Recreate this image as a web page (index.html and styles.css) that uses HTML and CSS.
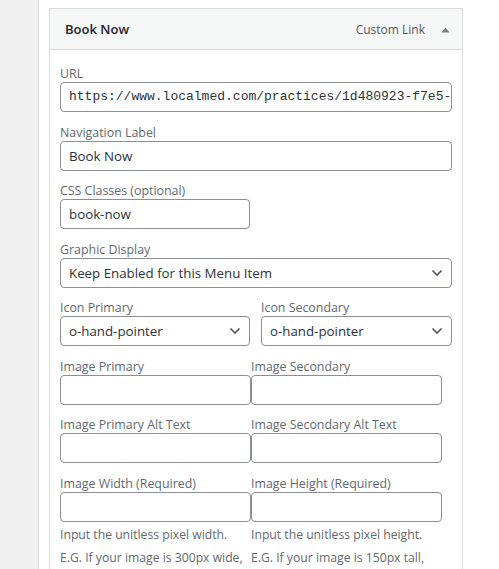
FILE: index.html
```html
<!DOCTYPE html>
<html lang="en">
  <head>
    <meta charset="UTF-8" />
    <title>Menu item settings</title>
    <link rel="stylesheet" href="styles.css">
  </head>
  <body>
    <div class="page">
      <!-- left admin column -->
      <aside class="side"></aside>

      <main class="content">
        <div class="menu-item">
          <!-- item bar -->
          <div class="item-bar">
            <span class="item-title">Book Now</span>
            <span class="item-controls">
              <span class="item-type">Custom Link</span>
              <svg class="item-toggle" width="9" height="6" viewBox="0 0 9 6"><path d="M0.5 5.5 L4.5 0.5 L8.5 5.5 Z" fill="#787c82"/></svg>
            </span>
          </div>

          <!-- item settings -->
          <div class="item-settings">
            <div class="field">
              <label>URL</label>
              <div class="input mono">https://www.localmed.com/practices/1d480923-f7e5-</div>
            </div>
            <div class="field">
              <label>Navigation Label</label>
              <div class="input">Book Now</div>
            </div>
            <div class="field">
              <label>CSS Classes (optional)</label>
              <div class="input half">book-now</div>
            </div>
            <div class="field">
              <label>Graphic Display</label>
              <div class="input select">
                <span>Keep Enabled for this Menu Item</span>
                <svg width="12" height="8" viewBox="0 0 12 8"><path d="M1.5 1.5 L6 6 L10.5 1.5" fill="none" stroke="#50575e" stroke-width="1.6"/></svg>
              </div>
            </div>

            <div class="cols gap">
              <div class="field">
                <label>Icon Primary</label>
                <div class="input select">
                  <span>o-hand-pointer</span>
                  <svg width="12" height="8" viewBox="0 0 12 8"><path d="M1.5 1.5 L6 6 L10.5 1.5" fill="none" stroke="#50575e" stroke-width="1.6"/></svg>
                </div>
              </div>
              <div class="field">
                <label>Icon Secondary</label>
                <div class="input select">
                  <span>o-hand-pointer</span>
                  <svg width="12" height="8" viewBox="0 0 12 8"><path d="M1.5 1.5 L6 6 L10.5 1.5" fill="none" stroke="#50575e" stroke-width="1.6"/></svg>
                </div>
              </div>
            </div>

            <div class="cols">
              <div class="field">
                <label>Image Primary</label>
                <div class="input"></div>
              </div>
              <div class="field">
                <label>Image Secondary</label>
                <div class="input"></div>
              </div>
            </div>

            <div class="cols">
              <div class="field">
                <label>Image Primary Alt Text</label>
                <div class="input"></div>
              </div>
              <div class="field">
                <label>Image Secondary Alt Text</label>
                <div class="input"></div>
              </div>
            </div>

            <div class="cols">
              <div class="field">
                <label>Image Width (Required)</label>
                <div class="input"></div>
                <p class="description">Input the unitless pixel width.<br>E.G. If your image is 300px wide,</p>
              </div>
              <div class="field">
                <label>Image Height (Required)</label>
                <div class="input"></div>
                <p class="description">Input the unitless pixel height.<br>E.G. If your image is 150px tall,</p>
              </div>
            </div>
          </div>
        </div>
      </main>
    </div>
  </body>
</html>
```

FILE: styles.css
```css
* {
  margin: 0;
  padding: 0;
  box-sizing: border-box;
}
body {
  background: #fff;
  font: 12.4px/1.5 'Open Sans', 'Noto Sans', sans-serif;
  color: #3c434a;
}

.page {
  display: flex;
  min-height: 569px;
}
.side {
  width: 39px;
  background: #f0f0f1;
  border-right: 1px solid #dcdcde;
}
.content {
  padding: 8px 0 0 10px;
}

/* menu item box */
.menu-item {
  width: 414px;
}
.item-bar {
  height: 42px;
  background: #f6f7f7;
  border: 1px solid #dcdcde;
  padding: 1px 12px 0 15px;

  display: flex;
  justify-content: space-between;
  align-items: center;
}
.item-title {
  font-size: 13px;
  font-weight: 600;
  color: #1d2327;
}
.item-controls {
  display: flex;
  align-items: center;
  gap: 16px;
}
.item-type {
  font-size: 12px;
  color: #50575e;
}
.item-settings {
  border: 1px solid #dcdcde;
  border-top: none;
  padding: 16px 10px 0 10px;
  height: 520px;
  overflow: hidden;
}

/* fields */
.field {
  margin-bottom: 12.5px;
}
.field label {
  display: block;
  color: #646970;
  line-height: 16px;
}
.input {
  height: 30px;
  border: 1px solid #8c8f94;
  border-radius: 4px;
  padding: 0 8px;
  font-size: 13.3px;
  line-height: 28px;
  color: #2c3338;
  white-space: nowrap;
  overflow: hidden;
}
.input.mono {
  font: 13px/28px 'Liberation Mono', monospace;
}
.input.half {
  width: 190px;
}
.select {
  display: flex;
  justify-content: space-between;
  align-items: center;
  padding-right: 8px;
}

.cols {
  display: grid;
  grid-template-columns: 191px 191px;
}
.cols.gap {
  grid-template-columns: 190px 191px;
  column-gap: 11px;
}

.description {
  color: #646970;
  font-size: 12.2px;
  line-height: 23px;
  margin-top: 1.5px;
  white-space: nowrap;
}
```
